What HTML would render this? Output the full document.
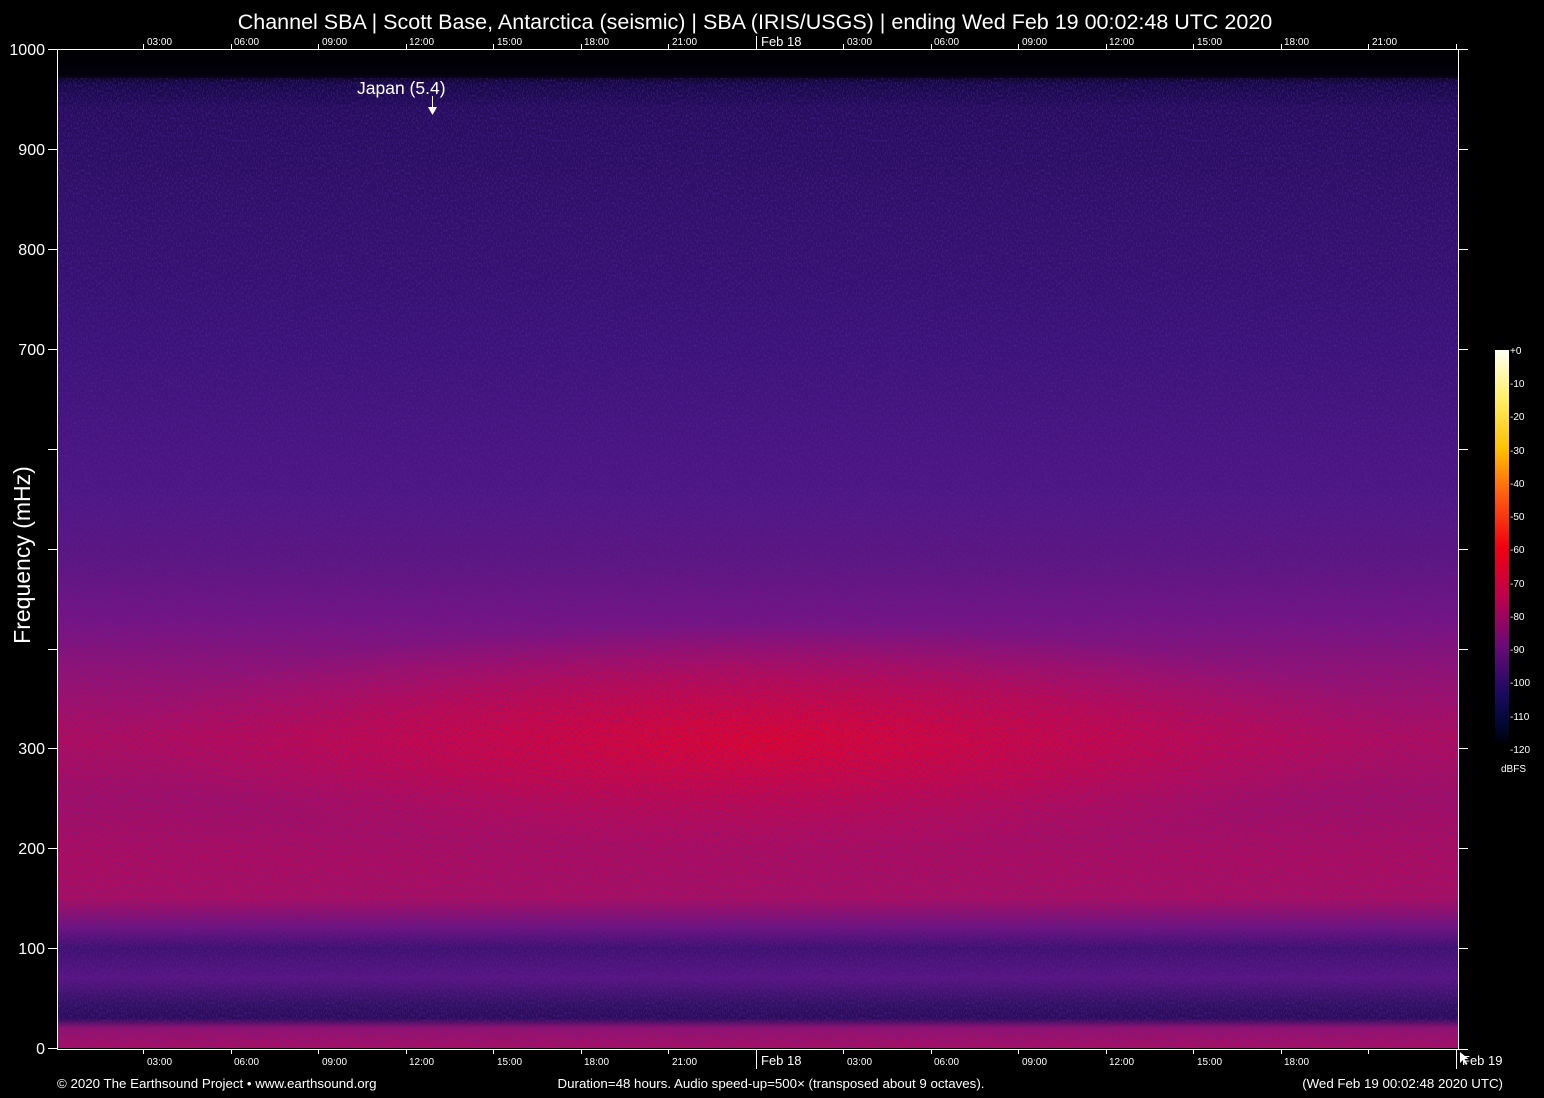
<!DOCTYPE html>
<html><head><meta charset="utf-8"><style>
html,body{margin:0;padding:0;background:#000;}
svg{display:block;}
text{font-family:"Liberation Sans",Arial,sans-serif;fill:#fff;}
</style></head><body>
<svg width="1544" height="1098" viewBox="0 0 1544 1098" xmlns="http://www.w3.org/2000/svg">
<defs>
<linearGradient id="v" x1="0" y1="49" x2="0" y2="1048" gradientUnits="userSpaceOnUse">
<stop offset="0" stop-color="#000"/>
<stop offset="0.025" stop-color="#03010a"/>
<stop offset="0.035" stop-color="#150845"/>
<stop offset="0.06" stop-color="#260c5a"/>
<stop offset="0.15" stop-color="#2e0f66"/>
<stop offset="0.30" stop-color="#3c1276"/>
<stop offset="0.45" stop-color="#501682"/>
<stop offset="0.51" stop-color="#5e157f"/>
<stop offset="0.57" stop-color="#781282"/>
<stop offset="0.63" stop-color="#9c106e"/>
<stop offset="0.69" stop-color="#b80a58"/>
<stop offset="0.75" stop-color="#a80c62"/>
<stop offset="0.81" stop-color="#b40a5a"/>
<stop offset="0.85" stop-color="#b00c5c"/>
<stop offset="0.88" stop-color="#70127e"/>
<stop offset="0.90" stop-color="#40106e"/>
<stop offset="0.93" stop-color="#5a1480"/>
<stop offset="0.957" stop-color="#30105e"/>
<stop offset="0.97" stop-color="#2a0c58"/>
<stop offset="0.98" stop-color="#98106c"/>
<stop offset="1" stop-color="#b00c5e"/>
</linearGradient>
<radialGradient id="r" cx="760" cy="740" r="1" gradientUnits="userSpaceOnUse" gradientTransform="translate(760 740) scale(640 115) translate(-760 -740)">
<stop offset="0" stop-color="#f00020" stop-opacity="0.85"/>
<stop offset="0.55" stop-color="#e80030" stop-opacity="0.45"/>
<stop offset="1" stop-color="#e00040" stop-opacity="0"/>
</radialGradient>
<filter id="n" x="0" y="0" width="100%" height="100%">
<feTurbulence type="fractalNoise" baseFrequency="0.8 0.4" numOctaves="2" seed="3"/>
<feColorMatrix type="matrix" values="0 0 0 0 0.08  0 0 0 0 0.02  0 0 0 0 0.35  0 0 0 -3 1.7"/>
</filter>
</defs>
<rect x="57" y="49" width="1401" height="999" fill="url(#v)"/>
<rect x="57" y="615" width="1401" height="250" fill="url(#r)"/>
<rect x="57" y="78" width="1401" height="970" filter="url(#n)" opacity="0.55"/>
<g stroke="#fff" stroke-width="1" fill="none">
<line x1="57.5" y1="49" x2="57.5" y2="1049"/>
<line x1="1458.5" y1="49" x2="1458.5" y2="1049"/>
<line x1="57" y1="49.5" x2="1468" y2="49.5"/>
<line x1="57" y1="1049.5" x2="1468" y2="1049.5"/>
<path d="M48 49.5h9M48 149.5h9M48 249.5h9M48 349.5h9M48 449.5h9M48 549.5h9M48 649.5h9M48 748.5h9M48 848.5h9M48 948.5h9M48 1048.5h9"/>
<path d="M1458 149.5h10M1458 249.5h10M1458 349.5h10M1458 449.5h10M1458 549.5h10M1458 649.5h10M1458 748.5h10M1458 848.5h10M1458 948.5h10"/>
<path d="M143.5 44v5M231.5 44v5M318.5 44v5M406.5 44v5M493.5 44v5M581.5 44v5M668.5 44v5M756.5 36v13M843.5 44v5M931.5 44v5M1018.5 44v5M1106.5 44v5M1193.5 44v5M1281.5 44v5M1368.5 44v5M1456.5 44v5"/>
<path d="M143.5 1049v5M231.5 1049v5M318.5 1049v5M406.5 1049v5M493.5 1049v5M581.5 1049v5M668.5 1049v5M756.5 1049v20M843.5 1049v5M931.5 1049v5M1018.5 1049v5M1106.5 1049v5M1193.5 1049v5M1281.5 1049v5M1368.5 1049v5M1456.5 1049v20"/>
</g>
<text x="755" y="29" font-size="21.5" text-anchor="middle">Channel SBA | Scott Base, Antarctica (seismic) | SBA (IRIS/USGS) | ending Wed Feb 19 00:02:48 UTC 2020</text>
<g font-size="16" text-anchor="end">
<text x="45" y="55">1000</text><text x="45" y="155">900</text><text x="45" y="255">800</text><text x="45" y="355">700</text>
<text x="45" y="754">300</text><text x="45" y="854">200</text><text x="45" y="954">100</text><text x="45" y="1054">0</text>
</g>
<text transform="translate(30 555) rotate(-90)" font-size="23" text-anchor="middle">Frequency (mHz)</text>
<g font-size="10">
<text x="147" y="45">03:00</text><text x="234" y="45">06:00</text><text x="322" y="45">09:00</text><text x="409" y="45">12:00</text><text x="497" y="45">15:00</text><text x="584" y="45">18:00</text><text x="672" y="45">21:00</text>
<text x="847" y="45">03:00</text><text x="934" y="45">06:00</text><text x="1022" y="45">09:00</text><text x="1109" y="45">12:00</text><text x="1197" y="45">15:00</text><text x="1284" y="45">18:00</text><text x="1372" y="45">21:00</text>
<text x="147" y="1065">03:00</text><text x="234" y="1065">06:00</text><text x="322" y="1065">09:00</text><text x="409" y="1065">12:00</text><text x="497" y="1065">15:00</text><text x="584" y="1065">18:00</text><text x="672" y="1065">21:00</text>
<text x="847" y="1065">03:00</text><text x="934" y="1065">06:00</text><text x="1022" y="1065">09:00</text><text x="1109" y="1065">12:00</text><text x="1197" y="1065">15:00</text><text x="1284" y="1065">18:00</text>
</g>
<text x="761" y="46" font-size="13">Feb 18</text>
<text x="761" y="1065" font-size="13">Feb 18</text>
<text x="1462" y="1065" font-size="13">Feb 19</text>
<path d="M1460 1052l0 11 3-3 3 5 1.5-1-3-5 4-0z" fill="#fff"/>
<text x="357" y="94" font-size="17.5">Japan (5.4)</text>
<line x1="432.5" y1="96" x2="432.5" y2="108" stroke="#fff"/>
<path d="M428 107h9l-4.5 8z" fill="#fff"/>
<g font-size="13.3">
<text x="57" y="1088">© 2020 The Earthsound Project • www.earthsound.org</text>
<text x="771" y="1088" text-anchor="middle">Duration=48 hours. Audio speed-up=500× (transposed about 9 octaves).</text>
<text x="1503" y="1088" text-anchor="end">(Wed Feb 19 00:02:48 2020 UTC)</text>
</g>
<linearGradient id="cb" x1="0" y1="350" x2="0" y2="745" gradientUnits="userSpaceOnUse">
<stop offset="0" stop-color="#fffff4"/>
<stop offset="0.12" stop-color="#fff06a"/>
<stop offset="0.25" stop-color="#ffc000"/>
<stop offset="0.37" stop-color="#ff5a10"/>
<stop offset="0.5" stop-color="#f00010"/>
<stop offset="0.62" stop-color="#c0004a"/>
<stop offset="0.75" stop-color="#6a0a78"/>
<stop offset="0.87" stop-color="#1a0a60"/>
<stop offset="0.95" stop-color="#000830"/>
<stop offset="1" stop-color="#000"/>
</linearGradient>
<rect x="1495" y="350" width="14" height="395" fill="url(#cb)"/>
<g font-size="10" fill="#ddd">
<text x="1510" y="354">+0</text><text x="1510" y="387">-10</text><text x="1510" y="420">-20</text><text x="1510" y="454">-30</text><text x="1510" y="487">-40</text><text x="1510" y="520">-50</text><text x="1510" y="553">-60</text><text x="1510" y="587">-70</text><text x="1510" y="620">-80</text><text x="1510" y="653">-90</text><text x="1510" y="686">-100</text><text x="1510" y="720">-110</text><text x="1510" y="753">-120</text>
<text x="1501" y="772">dBFS</text>
</g>
</svg>
</body></html>
